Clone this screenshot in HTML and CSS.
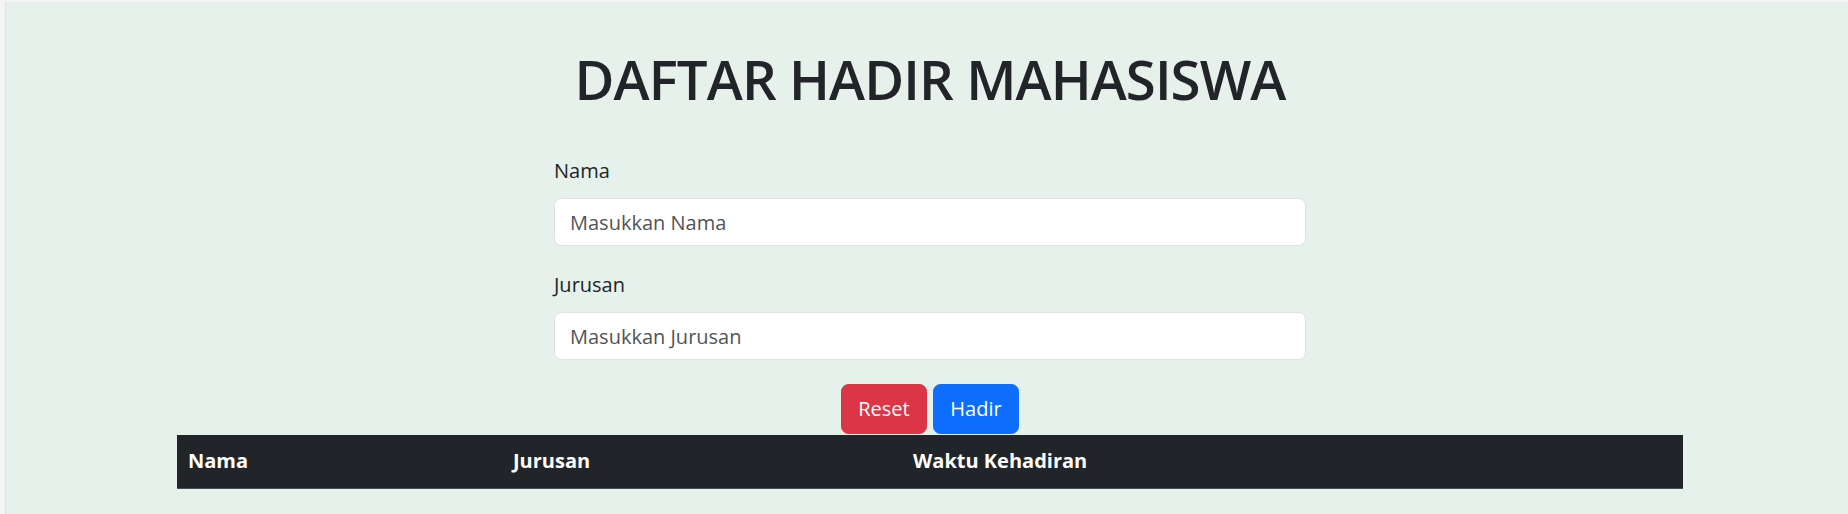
FILE: index.html
```html
<!DOCTYPE html>
<html lang="id">
<head>
<meta charset="utf-8">
<title>Daftar Hadir Mahasiswa</title>
<link rel="stylesheet" href="styles.css">
</head>
<body>
<div class="page">
  <h1 class="title">DAFTAR HADIR MAHASISWA</h1>
  <form class="form">
    <div class="field">
      <label class="field-label" for="nama">Nama</label>
      <input class="field-input" id="nama" type="text" placeholder="Masukkan Nama">
    </div>
    <div class="field">
      <label class="field-label" for="jurusan">Jurusan</label>
      <input class="field-input" id="jurusan" type="text" placeholder="Masukkan Jurusan">
    </div>
    <div class="actions">
      <button class="btn btn-reset" type="reset">Reset</button>
      <button class="btn btn-submit" type="button">Hadir</button>
    </div>
  </form>
  <table class="attendance">
    <thead>
      <tr>
        <th class="col-nama">Nama</th>
        <th class="col-jurusan">Jurusan</th>
        <th class="col-waktu">Waktu Kehadiran</th>
      </tr>
    </thead>
    <tbody></tbody>
  </table>
</div>
</body>
</html>
```
FILE: styles.css
```css
html, body {
  margin: 0;
  height: 100%;
}
body {
  background: #f4f4f4;
  font-family: "Open Sans", "Noto Sans", sans-serif;
  color: #212529;
  overflow: hidden;
}
.page {
  margin: 2px 0 0 5px;
  border-left: 1px solid #e0e2e1;
  background: #e7f1eb;
  min-height: calc(100% - 2px);
  box-sizing: border-box;
  padding: 45px 0 0 6px;
  display: flex;
  flex-direction: column;
  align-items: center;
}
.title {
  margin: 0 0 44px;
  font-size: 54.5px;
  line-height: 65px;
  font-weight: 600;
  letter-spacing: -0.9px;
  color: #212529;
}
.form {
  width: 752px;
  display: flex;
  flex-direction: column;
}
.field {
  display: flex;
  flex-direction: column;
  margin-bottom: 24px;
}
.field-label {
  font-size: 20px;
  line-height: 30px;
  margin-bottom: 12px;
  color: #212529;
}
.field-input {
  box-sizing: border-box;
  height: 48px;
  width: 100%;
  padding: 0 15px;
  border: 1px solid #dee2e6;
  border-radius: 7.5px;
  background: #fff;
  font-family: inherit;
  font-size: 20px;
  line-height: 30px;
  color: #212529;
  outline: none;
}
.field-input::placeholder {
  color: #505459;
  opacity: 1;
}
.actions {
  display: flex;
  justify-content: center;
  gap: 6px;
}
.btn {
  box-sizing: border-box;
  height: 50px;
  width: 86px;
  padding: 0;
  border: 1px solid transparent;
  border-radius: 7.5px;
  font-family: inherit;
  font-size: 20px;
  line-height: 30px;
  color: #fff;
}
.btn-reset {
  background: #dc3545;
  border-color: #dc3545;
}
.btn-submit {
  background: #0d6efd;
  border-color: #0d6efd;
}
.attendance {
  margin-top: 1px;
  width: 1506px;
  border-collapse: collapse;
  table-layout: fixed;
  background: #212529;
  color: #fff;
  border-bottom: 1px solid #4a4f54;
}
.attendance th {
  text-align: left;
  font-size: 20px;
  line-height: 30px;
  font-weight: 700;
  padding: 11px 11px 12px;
}
.col-nama { width: 303px; }
.col-jurusan { width: 378px; }
.col-waktu { width: auto; }
```
